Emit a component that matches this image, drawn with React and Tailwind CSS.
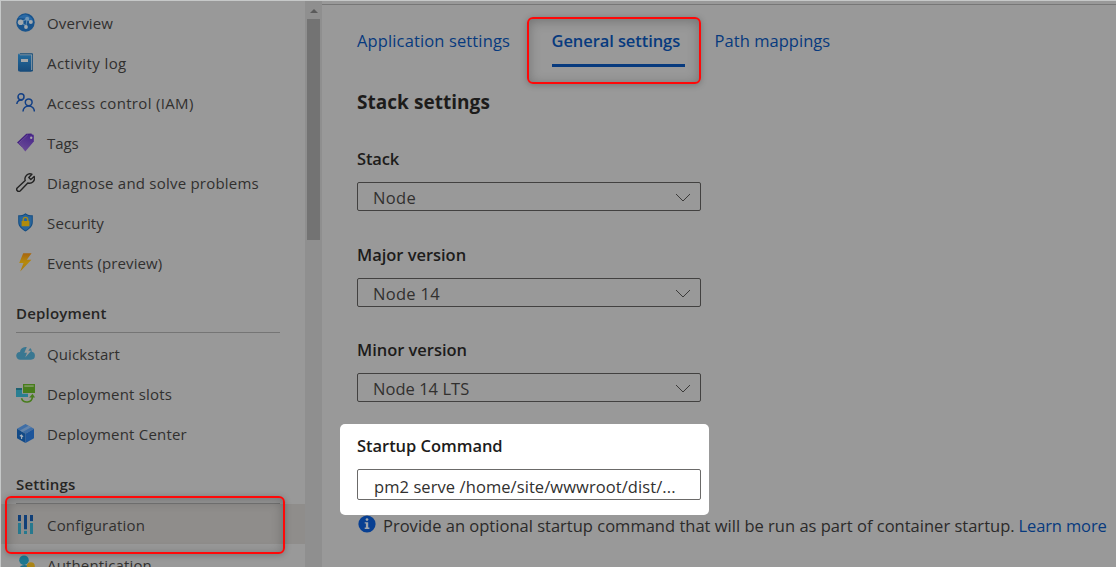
const OverviewIcon = () => (
  <svg width="19" height="19" viewBox="0 0 19 19">
    <circle cx="9.5" cy="9.5" r="9.2" fill="#18538c" />
    <path d="M2 5 Q9 -1 13 3 Q17 5 17 9 Q12 5 2 5" fill="#2a6aa6" />
    <path d="M4.5 9 L11 6 L15 9 M11 6 L10 13 L4.5 9" stroke="#5f8bb0" strokeWidth="1.1" fill="none" />
    <circle cx="4.6" cy="9.2" r="2.8" fill="#a3a9ad" />
    <circle cx="11.2" cy="5.8" r="2" fill="#6f95b5" />
    <circle cx="14.8" cy="9" r="2" fill="#a3a9ad" />
    <circle cx="10" cy="14" r="1.9" fill="#a3a9ad" />
  </svg>
);
const LogIcon = () => (
  <svg width="19" height="19" viewBox="0 0 19 19">
    <defs><linearGradient id="lg" x1="0" y1="0" x2="0" y2="1"><stop offset="0" stopColor="#246c9e" /><stop offset="1" stopColor="#174b7b" /></linearGradient></defs>
    <path d="M4 0.3H16a1 1 0 0 1 1 1V17.5a1 1 0 0 1-1 1H4Z" fill="#174d78" />
    <path d="M4 1.4H16.2V17H4Z" fill="#8f9ca6" />
    <path d="M3.4 0.6a1.4 1.4 0 0 0-1.4 1.3V17a1.5 1.5 0 0 0 1.5 1.5H15.2V2.2H4" fill="url(#lg)" />
    <rect x="5" y="6" width="7" height="3" fill="#a4a7a9" />
  </svg>
);
const AccessIcon = () => (
  <svg width="19" height="19" viewBox="0 0 19 19" fill="none" stroke="#123f85" strokeWidth="1.5">
    <circle cx="5" cy="3.8" r="3" />
    <path d="M0.8 11A4.3 4.3 0 0 1 6.5 7.2" />
    <circle cx="12.7" cy="9.3" r="3.4" />
    <path d="M7 18.6a5.7 5.7 0 0 1 11.4 0" />
  </svg>
);
const TagIcon = () => (
  <svg width="19" height="19" viewBox="0 0 19 19">
    <defs><linearGradient id="tg" x1="0.8" y1="0" x2="0.3" y2="1"><stop offset="0" stopColor="#48268a" /><stop offset="1" stopColor="#6a4b96" /></linearGradient></defs>
    <path d="M1 9.4 L10.3 0.8 L15.5 0.4 L16 2 L6 14Z" fill="#43217f" />
    <path d="M3 10.6 L12 2.2 L16.6 1.6 Q17.8 1.5 17.8 3 V8.6 L9.3 18.4Z" fill="url(#tg)" />
    <path d="M2.6 10.4 L11.8 1.8" stroke="#7f66a8" strokeWidth="0.7" />
    <circle cx="15.2" cy="4.7" r="1.2" fill="#a5a0ab" />
  </svg>
);
const WrenchIcon = () => (
  <svg width="19" height="19" viewBox="0 0 19 19">
    <path d="M15.9 1.2A5.1 5.1 0 0 0 9.2 7.5L1.2 15A2.1 2.1 0 0 0 4.1 18L11.8 10A5.1 5.1 0 0 0 18.2 3.4L14.8 6.5L12.8 4.4Z" fill="none" stroke="#222" strokeWidth="1.4" strokeLinejoin="round" />
  </svg>
);
const ShieldIcon = () => (
  <svg width="19" height="19" viewBox="0 0 19 19">
    <path d="M9.5 0.2C7.5 2 5 2.1 2.2 2.3V9C2.2 13.5 6 16.7 9.5 18.4C13 16.7 16.8 13.5 16.8 9V2.3C14 2.1 11.5 2 9.5 0.2Z" fill="#124c82" />
    <path d="M9.5 1.4C7.7 2.8 5.5 3.1 3.2 3.2V9C3.2 13 6.5 15.8 9.5 17.3C12.5 15.8 15.8 13 15.8 9V3.2C13.5 3.1 11.3 2.8 9.5 1.4Z" fill="#28659c" />
    <path d="M7.2 8.5V6.7a2.3 2.3 0 0 1 4.6 0V8.5" fill="none" stroke="#a88a18" strokeWidth="1.3" />
    <rect x="5.6" y="8" width="7.8" height="5.3" rx="0.6" fill="#af8b0d" />
  </svg>
);
const BoltIcon = () => (
  <svg width="19" height="19" viewBox="0 0 19 19">
    <defs><linearGradient id="bg" x1="0" y1="0" x2="0" y2="1"><stop offset="0" stopColor="#a8650e" /><stop offset="0.5" stopColor="#b58a0e" /><stop offset="1" stopColor="#a8780e" /></linearGradient></defs>
    <path d="M7.2 0.2H15.6L10.8 6.8H15.4L4.2 18.6L7.5 10H3.2Z" fill="url(#bg)" />
  </svg>
);
const CloudIcon = () => (
  <svg width="19" height="19" viewBox="0 0 19 19">
    <path d="M4.5 15.7A4 4 0 0 1 0.2 11.8A4 4 0 0 1 4 8A5.4 5.4 0 0 1 9.3 3Q10.3 2.8 10.8 3L8.3 8.7H11L9.2 13.5L15.2 6.8H12.3L14.2 4Q15.8 5.3 15.8 7.8A4 4 0 0 1 18.9 11.8A4 4 0 0 1 15 15.7Z" fill="#397791" />
  </svg>
);
const SlotsIcon = () => (
  <svg width="19" height="19" viewBox="0 0 19 19">
    <path d="M0 4H6V9.8H12V13H0Z" fill="#2a7f92" />
    <rect y="4" width="6" height="2" fill="#1e6171" />
    <rect x="7" y="0" width="12" height="9" fill="#487d1c" />
    <rect x="8.3" y="1.4" width="9.4" height="1.3" fill="#8da276" />
    <path d="M5.5 14.3C7.3 19.5 16 19.6 16.5 12.5" fill="none" stroke="#487d1c" strokeWidth="1.6" />
    <path d="M13.2 13.4L16.6 9.8L19 13.4Z" fill="#487d1c" />
  </svg>
);
const BoxIcon = () => (
  <svg width="19" height="19" viewBox="0 0 19 19">
    <path d="M9.5 0L18 4.7L9.5 9.8L1 4.7Z" fill="#3f6ea6" />
    <path d="M1 4.7L9.5 9.8V19L1 14.2Z" fill="#124a87" />
    <path d="M18 4.7L9.5 9.8V19L18 14.2Z" fill="#1d559a" />
    <path d="M4 6.5L12.6 1.7L15.2 3.2L6.6 8.1Z" fill="#6585ab" />
    <path d="M5.6 15V11.3M3.9 12.2L5.5 11L7 13" fill="none" stroke="#a8b1bc" strokeWidth="1.1" />
  </svg>
);
const ConfigIcon = () => (
  <svg width="19" height="19" viewBox="0 0 19 19">
    <g fill="#103f78">
      <rect x="2" y="0" width="3" height="6" />
      <rect x="8" y="0" width="3" height="14.5" />
      <rect x="14" y="0" width="3" height="6" />
    </g>
    <g fill="#27798e">
      <rect x="2" y="8" width="3" height="11" />
      <rect x="8" y="16" width="3" height="3" />
      <rect x="14" y="8" width="3" height="11" />
    </g>
    <g fill="#6d8e99">
      <rect x="2" y="6" width="3" height="1" />
      <rect x="14" y="6" width="3" height="1" />
      <rect x="8" y="14.5" width="3" height="1" />
    </g>
  </svg>
);
const AuthIcon = () => (
  <svg width="19" height="19" viewBox="0 0 19 19">
    <path d="M2 19Q2 10 8.5 10T15 19Z" fill="#1f6f87" />
    <circle cx="8" cy="5.2" r="4.8" fill="#1e7890" />
    <circle cx="14.8" cy="11.2" r="4" fill="#ab8516" />
  </svg>
);

function NavItem({ icon, label, track, active }) {
  return (
    <div className={`flex h-10 shrink-0 items-center pl-[15px] ${active ? "bg-[#8f8d8b]" : ""}`}>
      <span className="flex w-[31px] shrink-0 pt-px">{icon}</span>
      <span className={`pt-0.5 text-[15px] text-[#31302f] whitespace-nowrap ${track}`}>{label}</span>
    </div>
  );
}

function NavHeading({ label }) {
  return (
    <div className="ml-[15px] mr-[25px] h-[51px] shrink-0 border-b border-[#757575] pt-[15px]">
      <div className="text-[15px] leading-8 font-semibold tracking-[0.18px] text-[#262524]">{label}</div>
    </div>
  );
}

function Select({ label, value, labelTrack, valueTrack, className }) {
  return (
    <div className={`w-[344px] shrink-0 ${className}`}>
      <div className={`h-9 leading-[25px] font-semibold ${labelTrack}`}>{label}</div>
      <div className="flex h-[29px] items-center justify-between rounded-[2px] border border-[#424140] pl-[15px] pr-[9px]">
        <span className={`pt-[3px] text-[#31302f] ${valueTrack}`}>{value}</span>
        <svg width="16" height="9" viewBox="0 0 16 9" fill="none" stroke="#3b3a39" strokeWidth="1" className="mt-0.5">
          <path d="M1 1L8 8L15 1" />
        </svg>
      </div>
    </div>
  );
}

export default function App() {
  return (
    <div className="relative flex h-[567px] w-[1116px] overflow-hidden border-l border-t border-[#c6c8c8] bg-[#999999] font-['Open_Sans','Noto_Sans',sans-serif] text-[#1d1c1b]">
      <nav className="flex w-[304px] shrink-0 flex-col overflow-hidden pt-px">
        <NavItem icon={<OverviewIcon />} label="Overview" track="tracking-[0.12px]" />
        <NavItem icon={<LogIcon />} label="Activity log" track="tracking-[0.4px]" />
        <NavItem icon={<AccessIcon />} label="Access control (IAM)" track="tracking-[0.33px]" />
        <NavItem icon={<TagIcon />} label="Tags" track="tracking-[-0.1px]" />
        <NavItem icon={<WrenchIcon />} label="Diagnose and solve problems" track="tracking-[0.22px]" />
        <NavItem icon={<ShieldIcon />} label="Security" track="tracking-[0.15px]" />
        <NavItem icon={<BoltIcon />} label="Events (preview)" track="tracking-[0.1px]" />
        <NavHeading label="Deployment" />
        <NavItem icon={<CloudIcon />} label="Quickstart" track="tracking-[0.1px]" />
        <NavItem icon={<SlotsIcon />} label="Deployment slots" track="tracking-[0.19px]" />
        <NavItem icon={<BoxIcon />} label="Deployment Center" track="tracking-[0.2px]" />
        <NavHeading label="Settings" />
        <NavItem icon={<ConfigIcon />} label="Configuration" track="tracking-[0.18px]" active />
        <NavItem icon={<AuthIcon />} label="Authentication" track="tracking-[0.15px]" />
      </nav>

      <div className="flex w-[17px] shrink-0 flex-col items-center bg-[#8f8f8f]">
        <div className="flex h-[18px] items-center pt-0.5">
          <svg width="8" height="4" viewBox="0 0 8 4"><path d="M0 4L4 0L8 4Z" fill="#5a5a5a" /></svg>
        </div>
        <div className="h-[221px] w-[13px] bg-[#737373]" />
      </div>

      <main className="flex min-w-0 flex-1 flex-col text-[16.5px] whitespace-nowrap">
        <div className="h-1 shrink-0 border-b border-[#777777]" />
        <div className="flex h-[62px] shrink-0 pl-[35px] text-[#073a7e]">
          <span className="w-[194.5px] pt-[22px] leading-7 tracking-[0.13px]">Application settings</span>
          <span className="mr-[30px] w-[133px] border-b-[3px] border-[#073a7e] pt-[22px] leading-7 font-semibold tracking-[-0.08px]">General settings</span>
          <span className="pt-[22px] leading-7 tracking-[0.05px]">Path mappings</span>
        </div>
        <div className="h-[79px] shrink-0 pt-[19px] pl-[35px] text-[19px] leading-8 font-bold tracking-[0.04px]">Stack settings</div>
        <div className="flex flex-col pl-[35px]">
          <Select label="Stack" value="Node" labelTrack="tracking-[-0.16px]" valueTrack="tracking-[0.33px]" className="h-24" />
          <Select label="Major version" value="Node 14" labelTrack="tracking-[-0.03px]" valueTrack="tracking-[0.3px]" className="h-[95px]" />
          <Select label="Minor version" value="Node 14 LTS" labelTrack="tracking-[-0.03px]" valueTrack="tracking-[0.03px]" className="h-[87px]" />
        </div>
        <section className="ml-[18px] h-[91px] w-[369px] shrink-0 rounded-[5px] bg-white pt-2 pl-[17px]">
          <div className="h-[37px] leading-[27px] font-semibold tracking-[-0.04px]">Startup Command</div>
          <div className="flex h-[31px] w-[344px] items-center rounded-[2px] border border-[#6b6a69] pl-4 text-[#31302f]">
            <span className="pt-[5px] tracking-[0.08px]">pm2 serve /home/site/wwwroot/dist/...</span>
          </div>
        </section>
        <div className="flex h-[22px] shrink-0 items-center pl-[36px] text-[#2b2a29]">
          <svg width="18" height="18" viewBox="0 0 18 18" className="mb-1 shrink-0">
            <circle cx="9" cy="9" r="8.6" fill="#073f92" />
            <circle cx="9" cy="4.6" r="1.35" fill="#9fa5ad" />
            <path d="M6.7 7.2H10.2V12.6H11.4V14H6.7V12.6H7.9V8.6H6.7Z" fill="#9fa5ad" />
          </svg>
          <span className="ml-[7px] tracking-[0.01px]">Provide an optional startup command that will be run as part of container startup.</span>
          <span className="ml-1 tracking-[-0.14px] text-[#073a7e]">Learn more</span>
        </div>
      </main>

      <div className="absolute top-[495px] left-[4px] h-[58px] w-[280px] rounded-[6px] border-2 border-[#ff0808] shadow-[0_1px_6px_rgba(0,0,0,0.25),inset_0_2px_12px_rgba(0,0,0,0.25)]" />
      <div className="absolute top-[16px] left-[526px] h-[67px] w-[174px] rounded-[6px] border-2 border-[#ff0808] shadow-[0_1px_6px_rgba(0,0,0,0.25),inset_0_2px_12px_rgba(0,0,0,0.25)]" />
    </div>
  );
}
